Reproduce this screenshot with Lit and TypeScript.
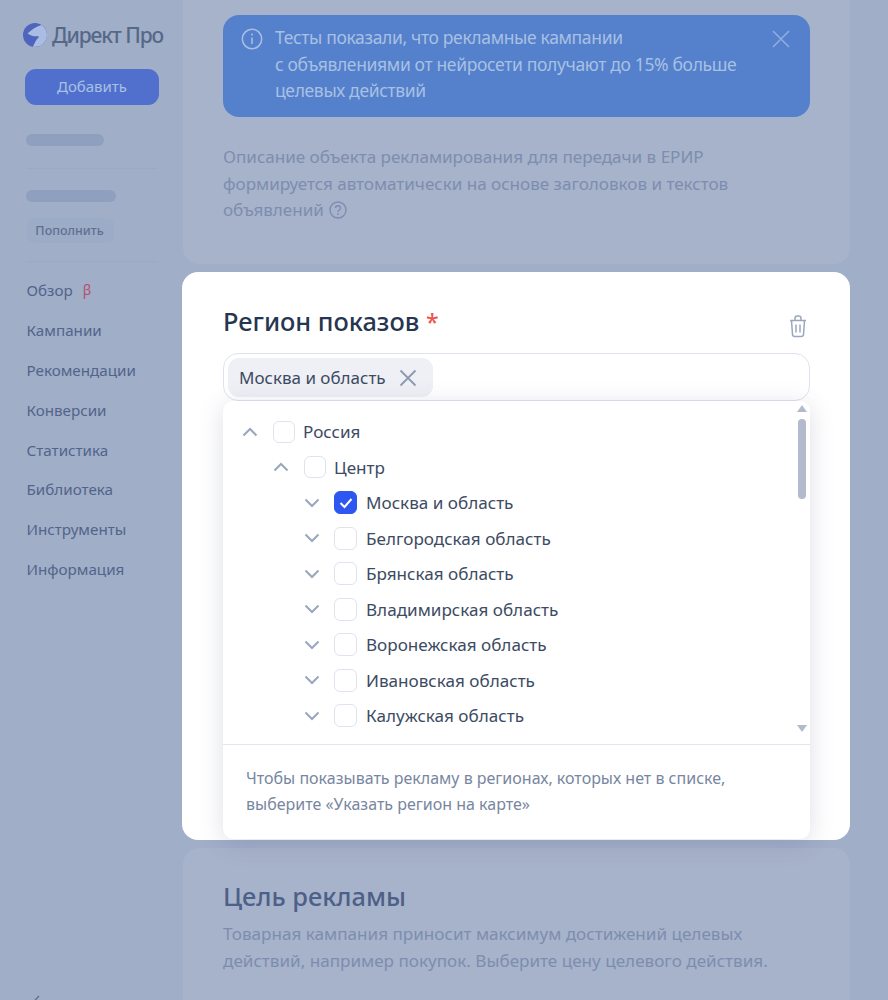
import { LitElement, html, css } from "lit";
import { customElement } from "lit/decorators.js";

const chevron = (up: boolean) => html`<svg class="chev" width="16" height="10" viewBox="0 0 16 10" fill="none"><path d=${up ? "M1.5 8.5 8 2l6.5 6.5" : "M1.5 1.5 8 8l6.5-6.5"} stroke="#9aa6bc" stroke-width="2"/></svg>`;

const rows: [string, string, boolean, boolean][] = [
  ["Россия", "l0", true, false],
  ["Центр", "l1", true, false],
  ["Москва и область", "l2", false, true],
  ["Белгородская область", "l2", false, false],
  ["Брянская область", "l2", false, false],
  ["Владимирская область", "l2", false, false],
  ["Воронежская область", "l2", false, false],
  ["Ивановская область", "l2", false, false],
  ["Калужская область", "l2", false, false],
];

const nav = ["Обзор", "Кампании", "Рекомендации", "Конверсии", "Статистика", "Библиотека", "Инструменты", "Информация"];

@customElement("app-root")
export class AppRoot extends LitElement {
  static styles = css`
    :host { display: block; width: 888px; height: 1000px; overflow: hidden; background: #a0aec8; font-family: "Noto Sans", "Liberation Sans", sans-serif; color: #27364f; position: relative; }
    * { box-sizing: border-box; }
    .layout { display: flex; height: 1000px; overflow: hidden; }
    .side { width: 183px; flex: none; padding: 22px 0 0 26px; display: flex; flex-direction: column; align-items: flex-start; }
    .side > * { flex: none; }
    .logo { display: flex; align-items: center; gap: 5px; margin-left: -3px; height: 26px; }
    .logo span { font-size: 21px; font-weight: 500; color: #566888; letter-spacing: -1.1px; white-space: nowrap; }
    .add { margin: 21px 0 0 -1px; width: 134px; height: 36px; padding-bottom: 2px; border-radius: 11px; background: #5170cd; color: #a9c0e4; font-size: 15px; display: flex; align-items: center; justify-content: center; }
    .skel { height: 12px; border-radius: 6px; background: #8f9fbe; }
    .s1 { width: 78px; margin-top: 29px; }
    .s2 { width: 90px; margin-top: 21px; }
    .hr { width: 130px; height: 1px; background: #9aa9c4; margin-left: 1px; }
    .h1 { margin-top: 22px; }
    .h2 { margin-top: 18px; }
    .fill { margin: 16px 0 0 1px; width: 87px; height: 25px; padding-right: 2px; border-radius: 8px; background: #9cabc6; color: #5f7091; font-size: 12.5px; font-weight: 500; display: flex; align-items: center; justify-content: center; }
    .nav { margin-top: 8px; display: flex; flex-direction: column; margin-left: 0.5px; }
    .nav div { height: 39.9px; display: flex; align-items: center; font-size: 15.2px; font-weight: 400; color: #52648a; white-space: nowrap; }
    .beta { color: #b5506e; margin-left: 10px; font-size: 14px; }
    .back { margin: 406px 0 0 5px; }
    .main { width: 667px; flex: none; display: flex; flex-direction: column; gap: 8px; }
    .card { background: #a7b3ca; padding: 0 40px 0 40px; flex: none; }
    .top { height: 264px; padding-top: 15px; border-radius: 0 0 16px 16px; }
    .banner { width: 587px; height: 102px; border-radius: 16px; background: #5580cb; display: flex; padding: 9px 17px 0 18px; gap: 12px; color: #a8c0e4; font-size: 17.5px; line-height: 26.5px; }
    .banner .txt { flex: 1; letter-spacing: -0.35px; }
    .banner svg { flex: none; }
    .info { margin-top: 4px; }
    .close { margin-top: 6px; margin-left: -3px; margin-right: 3px; }
    .desc { margin-top: 27px; font-size: 17.1px; line-height: 26.5px; color: #7d8daf; letter-spacing: -0.03px; }
    .desc svg { vertical-align: -3px; margin-left: 1px; }
    .white { background: #fff; height: 568px; margin-left: -1px; border-radius: 16px; padding: 30px 40px 0 41px; position: relative; }
    .head { display: flex; justify-content: space-between; align-items: flex-start; height: 51px; }
    .title { font-size: 25.4px; font-weight: 500; line-height: 38px; color: #27364f; }
    .title b { color: #ef5350; font-weight: 500; font-size: 23px; }
    .trash { margin: 13px 3px 0 0; }
    .input { width: 587px; height: 48px; border: 1px solid #dfe3ee; border-radius: 15px; padding: 4px; display: flex; }
    .chip { height: 39px; width: 205px; border-radius: 11px; background: #eef0f5; display: flex; align-items: center; padding: 0 16px 0 11px; justify-content: space-between; font-size: 17px; color: #3d4b62; white-space: nowrap; }
    .drop { width: 587px; height: 438px; margin-top: 0; border-radius: 10px; background: #fff; box-shadow: 0 4px 24px rgba(70, 80, 120, 0.18); display: flex; flex-direction: column; position: relative; }
    .list { height: 343px; padding-top: 13px; display: flex; flex-direction: column; }
    .row { height: 35.5px; display: flex; align-items: center; font-size: 17.1px; color: #3d4b62; white-space: nowrap; flex: none; }
    .l1 { padding-left: 31px; }
    .l2 { padding-left: 62px; }
    .chev { flex: none; margin-right: 15px; margin-left: 19px; }
    .l2 .chev { margin-right: 14px; }
    .box { width: 22px; height: 22px; border: 1px solid #dfe3ee; border-radius: 6px; background: #fff; margin-right: 8px; flex: none; display: flex; align-items: center; justify-content: center; }
    .l2 .box { width: 23px; height: 23px; margin-right: 9px; }
    .box.on { background: #2d57f0; border-color: #2d57f0; }
    .foot { border-top: 1px solid #e1e6f0; padding: 20px 23px 0; font-size: 16px; line-height: 26px; color: #78869f; }
    .scroll { position: absolute; right: 0; top: 0; width: 16px; height: 343px; }
    .thumb { position: absolute; left: 4px; top: 18px; width: 8px; height: 80px; border-radius: 4px; background: #b4bace; }
    .arr { position: absolute; left: 3px; width: 0; height: 0; border-left: 5px solid transparent; border-right: 5px solid transparent; }
    .arr.u { top: 4px; border-bottom: 7px solid #b4bace; }
    .arr.d { top: 324px; border-top: 7px solid #b4bace; }
    .bottom { height: 160px; padding-top: 29px; border-radius: 16px 16px 0 0; }
    .bottom h2 { margin: 0; font-size: 25.4px; font-weight: 500; line-height: 38px; color: #4d6088; }
    .bottom p { margin: 5px 0 0; font-size: 17.1px; line-height: 27px; color: #7d8daf; white-space: nowrap; }
  `;

  render() {
    return html`<div class="layout">
      <div class="side">
        <div class="logo">
          <svg width="24" height="24" viewBox="0 0 24 24"><circle cx="12" cy="12" r="12" fill="#4f64bd"/><path d="M4.500 10.500C8 7 13 3.500 18.500 2 22 4.200 24 7.800 24 12c0 5.500-3.700 10.200-8.800 11.600L10 24c1-3.500 3-7 5.500-9.500 .6-.6.400-1.300-.4-1.200C11.500 13.600 8 13 4.500 10.500z" fill="#a9bde2"/></svg>
          <span>Директ Про</span>
        </div>
        <div class="add">Добавить</div>
        <div class="skel s1"></div>
        <div class="hr h1"></div>
        <div class="skel s2"></div>
        <div class="fill">Пополнить</div>
        <div class="hr h2"></div>
        <div class="nav">
          ${nav.map((n, i) => html`<div>${n}${i === 0 ? html`<span class="beta">β</span>` : ""}</div>`)}
        </div>
        <svg class="back" width="10" height="16" viewBox="0 0 10 16" fill="none"><path d="M8 1 1.500 8 8 15" stroke="#64748f" stroke-width="1.500"/></svg>
      </div>
      <div class="main">
        <div class="card top">
          <div class="banner">
            <svg class="info" width="22" height="22" viewBox="0 0 22 22" fill="none"><circle cx="11" cy="11" r="9.700" stroke="#a8c0e4" stroke-width="1.500"/><path d="M11 9.500v6.500" stroke="#a8c0e4" stroke-width="1.500"/><circle cx="11" cy="6.500" r="1" fill="#a8c0e4"/></svg>
            <div class="txt">Тесты показали, что рекламные кампании<br>с объявлениями от нейросети получают до 15% больше<br>целевых действий</div>
            <svg class="close" width="18" height="18" viewBox="0 0 18 18" fill="none"><path d="M1 1l16 16M17 1 1 17" stroke="#90ace0" stroke-width="1.600"/></svg>
          </div>
          <div class="desc">Описание объекта рекламирования для передачи в ЕРИР<br>формируется автоматически на основе заголовков и текстов<br>объявлений <svg width="18" height="18" viewBox="0 0 18 18" fill="none"><circle cx="9" cy="9" r="8" stroke="#7d8daf" stroke-width="1.400"/><path d="M6.500 7c0-1.500 1.200-2.300 2.500-2.300S11.500 5.500 11.500 7c0 2-2.500 2-2.500 4" stroke="#7d8daf" stroke-width="1.400"/><circle cx="9" cy="13.200" r=".9" fill="#7d8daf"/></svg></div>
        </div>
        <div class="card white">
          <div class="head">
            <div class="title">Регион показов <b>*</b></div>
            <svg class="trash" width="18" height="23" viewBox="0 0 18 23" fill="none" stroke="#9aa6bc" stroke-width="1.500"><path d="M1 5.500h16"/><path d="M6 5.500V3.200C6 2 7 1 8.200 1h1.600C11 1 12 2 12 3.200v2.300"/><path d="M2.500 5.500 3.500 19.500c.1 1.300 1 2 2.200 2h6.600c1.200 0 2.100-.7 2.200-2l1-14"/><path d="M7 9.500v8M11 9.500v8"/></svg>
          </div>
          <div class="input">
            <div class="chip"><span>Москва и область</span><svg width="18" height="18" viewBox="0 0 18 18" fill="none"><path d="M1.500 1.500l15 15M16.500 1.500l-15 15" stroke="#8e99af" stroke-width="1.800"/></svg></div>
          </div>
          <div class="drop">
            <div class="list">
              ${rows.map(([t, lvl, up, on]) => html`<div class="row ${lvl}">
                ${chevron(up)}
                <div class="box ${on ? "on" : ""}">${on ? html`<svg width="14" height="12" viewBox="0 0 14 12" fill="none"><path d="M1.500 6 5.500 10 12.500 2" stroke="#fff" stroke-width="2"/></svg>` : ""}</div>
                <span>${t}</span>
              </div>`)}
            </div>
            <div class="scroll"><div class="arr u"></div><div class="thumb"></div><div class="arr d"></div></div>
            <div class="foot">Чтобы показывать рекламу в регионах, которых нет в списке,<br>выберите «Указать регион на карте»</div>
          </div>
        </div>
        <div class="card bottom">
          <h2>Цель рекламы</h2>
          <p>Товарная кампания приносит максимум достижений целевых<br>действий, например покупок. Выберите цену целевого действия.</p>
        </div>
      </div>
    </div>`;
  }
}
